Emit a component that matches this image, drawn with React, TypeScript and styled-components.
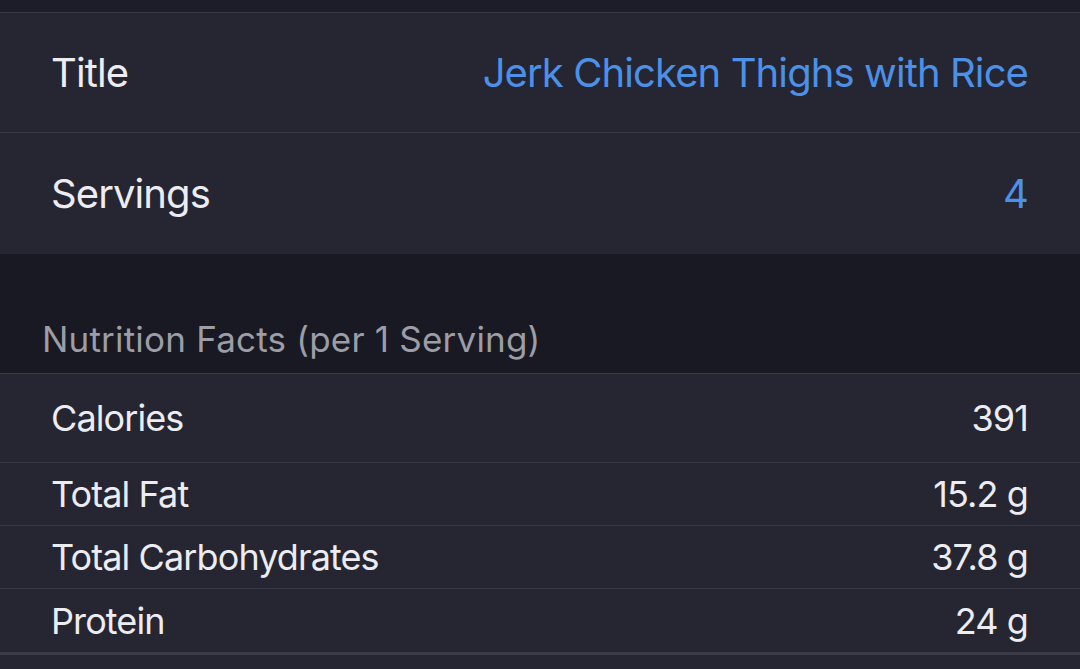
import React from "react";
import styled, { createGlobalStyle } from "styled-components";

const Global = createGlobalStyle`
  html, body { margin: 0; padding: 0; background: #181922; }
  body { font-family: Inter, "Noto Sans", sans-serif; -webkit-font-smoothing: antialiased; }
`;

const Page = styled.div`
  width: 1080px;
  height: 669px;
  overflow: hidden;
  background: #181922;
  display: flex;
  flex-direction: column;
`;

const TopBar = styled.div`
  height: 12px;
  flex: none;
  background: #1c1d28;
  border-bottom: 1px solid #363845;
`;

const Group = styled.div`
  background: #252631;
  display: flex;
  flex-direction: column;
`;

const Row = styled.div<{ $h: number; $size: number; $line?: boolean }>`
  height: ${(p) => p.$h}px;
  flex: none;
  display: flex;
  align-items: center;
  justify-content: space-between;
  padding: 0 52px 0 51px;
  font-size: ${(p) => p.$size}px;
  letter-spacing: -0.9px;
  color: #ececf1;
  border-bottom: ${(p) => (p.$line ? "1px solid #363845" : "none")};
  box-sizing: border-box;
`;

const Value = styled.span<{ $blue?: boolean }>`
  color: ${(p) => (p.$blue ? "#4c90e8" : "#ececf1")};
`;

const SectionHeader = styled.div`
  height: 120px;
  flex: none;
  display: flex;
  align-items: flex-end;
  padding: 0 42px 13px;
  box-sizing: border-box;
  font-size: 35px;
  letter-spacing: 0.2px;
  color: #9c9da6;
  border-bottom: 1px solid #3a3c49;
  background: #181922;
`;

const ThickLine = styled.div`
  height: 3px;
  flex: none;
  background: #3a3c4a;
`;

const Filler = styled.div`
  flex: 1;
  background: #252631;
`;

const nutrition = [
  { label: "Calories", value: "391", h: 89 },
  { label: "Total Fat", value: "15.2 g", h: 63 },
  { label: "Total Carbohydrates", value: "37.8 g", h: 63 },
  { label: "Protein", value: "24 g", h: 63 },
];

export default function App() {
  return (
    <Page>
      <Global />
      <TopBar />
      <Group>
        <Row $h={120} $size={40} $line>
          <span>Title</span>
          <Value $blue>Jerk Chicken Thighs with Rice</Value>
        </Row>
        <Row $h={121} $size={40}>
          <span>Servings</span>
          <Value $blue>4</Value>
        </Row>
      </Group>
      <SectionHeader>Nutrition Facts (per 1 Serving)</SectionHeader>
      <Group>
        {nutrition.map((n, i) => (
          <Row key={n.label} $h={n.h} $size={36} $line={i < nutrition.length - 1}>
            <span>{n.label}</span>
            <Value>{n.value}</Value>
          </Row>
        ))}
      </Group>
      <ThickLine />
      <Filler />
    </Page>
  );
}
